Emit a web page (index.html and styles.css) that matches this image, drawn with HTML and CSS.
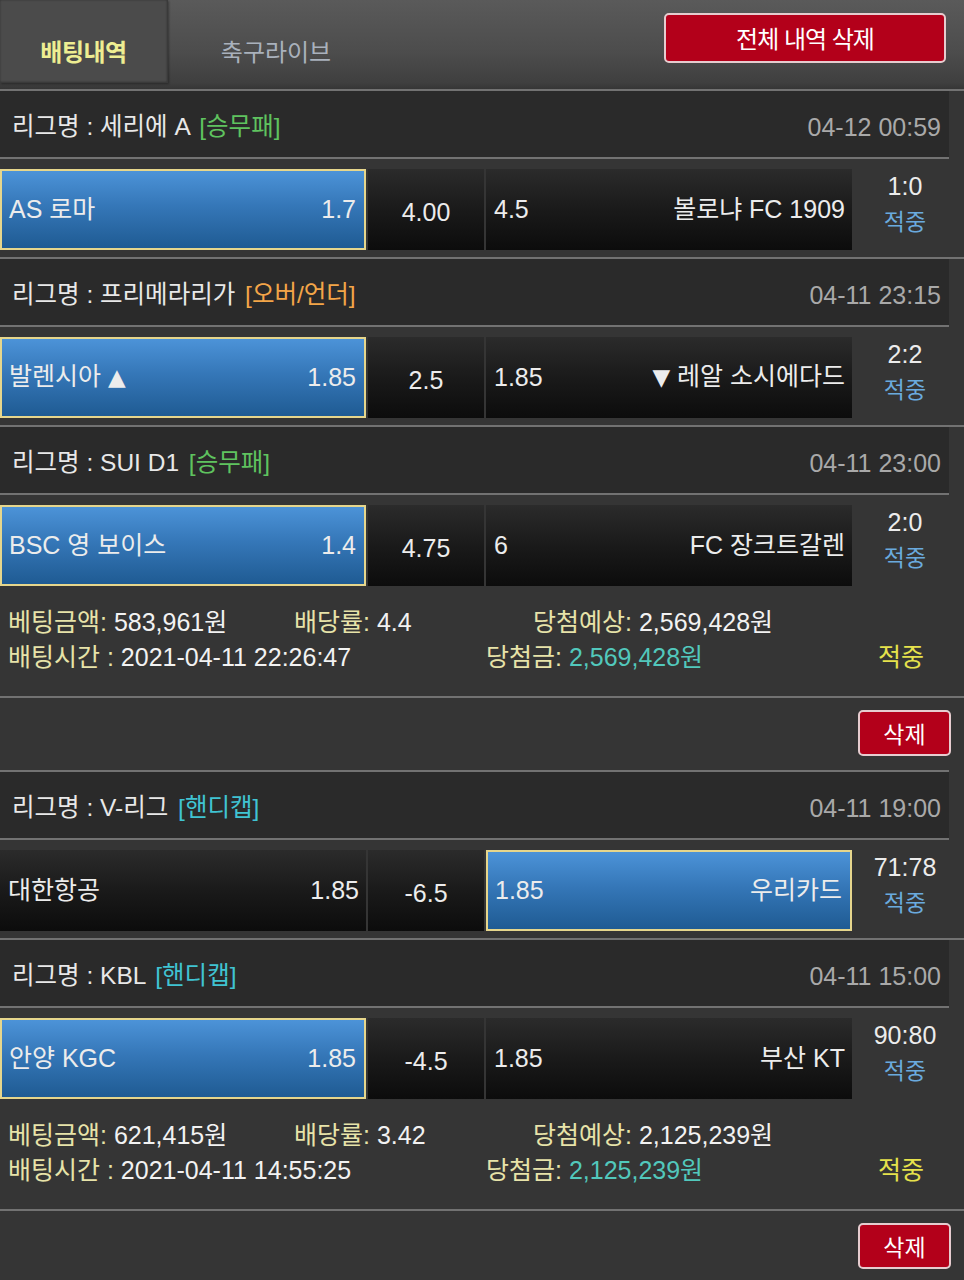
FILE: index.html
```html
<!DOCTYPE html>
<html lang="ko">
<head>
<meta charset="utf-8">
<title>배팅내역</title>
<link rel="stylesheet" href="styles.css">
</head>
<body>
<div class="topbar">
  <div class="tab active">배팅내역</div>
  <div class="tab">축구라이브</div>
  <div class="spacer"></div>
  <button class="btn-red btn-all">전체 내역 삭제</button>
</div>
<div class="line"></div>

<div class="league"><span>리그명 : 세리에 A <span class="tag green">[승무패]</span></span><span class="date">04-12 00:59</span></div>
<div class="line short"></div>
<div class="match">
  <div class="cell team sel"><span>AS 로마</span><span>1.7</span></div>
  <div class="cell mid">4.00</div>
  <div class="cell team"><span>4.5</span><span>볼로냐 FC 1909</span></div>
  <div class="score"><div>1:0</div><div class="hit">적중</div></div>
</div>
<div class="line"></div>

<div class="league"><span>리그명 : 프리메라리가 <span class="tag orange">[오버/언더]</span></span><span class="date">04-11 23:15</span></div>
<div class="line short"></div>
<div class="match">
  <div class="cell team sel"><span>발렌시아 <span class="tri">▲</span></span><span>1.85</span></div>
  <div class="cell mid">2.5</div>
  <div class="cell team"><span>1.85</span><span><span class="tri">▼</span> 레알 소시에다드</span></div>
  <div class="score"><div>2:2</div><div class="hit">적중</div></div>
</div>
<div class="line"></div>

<div class="league"><span>리그명 : SUI D1 <span class="tag green">[승무패]</span></span><span class="date">04-11 23:00</span></div>
<div class="line short"></div>
<div class="match">
  <div class="cell team sel"><span>BSC 영 보이스</span><span>1.4</span></div>
  <div class="cell mid">4.75</div>
  <div class="cell team"><span>6</span><span>FC 장크트갈렌</span></div>
  <div class="score"><div>2:0</div><div class="hit">적중</div></div>
</div>
<div class="summary">
  <div class="srow">
    <span class="c1"><span class="lbl">베팅금액:</span> 583,961원</span>
    <span class="c2"><span class="lbl">배당률:</span> 4.4</span>
    <span><span class="lbl">당첨예상:</span> 2,569,428원</span>
  </div>
  <div class="srow">
    <span class="d1"><span class="lbl">배팅시간 :</span> 2021-04-11 22:26:47</span>
    <span class="d2"><span class="lbl">당첨금:</span> <span class="teal">2,569,428원</span></span>
    <span class="win">적중</span>
  </div>
</div>
<div class="line"></div>
<div class="delrow"><button class="btn-red btn-del">삭제</button></div>
<div class="line short"></div>

<div class="league"><span>리그명 : V-리그 <span class="tag cyan">[핸디캡]</span></span><span class="date">04-11 19:00</span></div>
<div class="line short"></div>
<div class="match">
  <div class="cell team"><span>대한항공</span><span>1.85</span></div>
  <div class="cell mid">-6.5</div>
  <div class="cell team sel"><span>1.85</span><span>우리카드</span></div>
  <div class="score"><div>71:78</div><div class="hit">적중</div></div>
</div>
<div class="line"></div>

<div class="league"><span>리그명 : KBL <span class="tag cyan">[핸디캡]</span></span><span class="date">04-11 15:00</span></div>
<div class="line short"></div>
<div class="match">
  <div class="cell team sel"><span>안양 KGC</span><span>1.85</span></div>
  <div class="cell mid">-4.5</div>
  <div class="cell team"><span>1.85</span><span>부산 KT</span></div>
  <div class="score"><div>90:80</div><div class="hit">적중</div></div>
</div>
<div class="summary">
  <div class="srow">
    <span class="c1"><span class="lbl">베팅금액:</span> 621,415원</span>
    <span class="c2"><span class="lbl">배당률:</span> 3.42</span>
    <span><span class="lbl">당첨예상:</span> 2,125,239원</span>
  </div>
  <div class="srow">
    <span class="d1"><span class="lbl">배팅시간 :</span> 2021-04-11 14:55:25</span>
    <span class="d2"><span class="lbl">당첨금:</span> <span class="teal">2,125,239원</span></span>
    <span class="win">적중</span>
  </div>
</div>
<div class="line"></div>
<div class="delrow"><button class="btn-red btn-del">삭제</button></div>
</body>
</html>
```

FILE: styles.css
```css
* { box-sizing: border-box; }
html, body { margin: 0; padding: 0; }
body {
  width: 964px;
  height: 1280px;
  overflow: hidden;
  background: #353535;
  color: #ececec;
  font-family: "Liberation Sans", "Noto Sans CJK KR", "DejaVu Sans", sans-serif;
  font-size: 23px;
  line-height: 1.2;
}

.topbar {
  height: 89px;
  display: flex;
  align-items: flex-start;
  background: linear-gradient(#5a5a5a, #4c4c4c 60%, #3f3f3f 93%, #363636);
}
.tab {
  height: 83px;
  display: flex;
  align-items: center;
  justify-content: center;
  padding-top: 24px;
  font-size: 24px;
  color: #a9b1bc;
}
.tab:first-child { width: 168px; }
.tab:nth-child(2) { width: 216px; }
.tab.active {
  background: #4b4b4b;
  color: #eeee92;
  font-weight: bold;
  font-size: 24px;
  border-right: 1px solid #3a3a3a;
  border-bottom: 1px solid #3a3a3a;
  box-shadow: inset 0 0 2px rgba(0,0,0,0.4), 1px 1px 2px rgba(0,0,0,0.35);
  letter-spacing: -0.5px;
}
.spacer { flex: 1; }

.btn-red {
  font-family: inherit;
  color: #ffffff;
  background: #b3001a;
  border: 2px solid #e6cccf;
  border-radius: 5px;
  padding: 0;
  display: flex;
  align-items: center;
  justify-content: center;
  cursor: pointer;
}
.btn-all {
  width: 282px;
  height: 50px;
  margin-top: 13px;
  margin-right: 18px;
  font-size: 24px;
  letter-spacing: -1px;
  padding-bottom: 2px;
}
.btn-del {
  width: 93px;
  height: 46px;
  margin-top: 12px;
  margin-right: 13px;
  font-size: 23px;
}

.line { height: 2px; background: #727272; }
.line.short { margin-right: 15px; }

.league {
  height: 66px;
  margin-right: 15px;
  background: #2a2a2a;
  display: flex;
  align-items: center;
  justify-content: space-between;
  padding: 6px 8px 0 12px;
  font-size: 24.5px;
  color: #e8e8e8;
}
.date { color: #a9a9a9; font-size: 25px; }
.tag { margin-left: 3px; }
.tag.green { color: #5fc35f; }
.tag.orange { color: #f3a548; }
.tag.cyan { color: #40c3d2; }

.match {
  height: 98px;
  display: flex;
  gap: 2px;
  padding-top: 10px;
  font-size: 25px;
}
.cell {
  height: 81px;
  display: flex;
  align-items: center;
  background: linear-gradient(#2b2b2b, #1a1a1a 50%, #0c0c0c);
}
.cell.team {
  width: 366px;
  justify-content: space-between;
  padding: 0 7px 2px 8px;
}
.cell.sel {
  border: 2px solid #e6d68c;
  background: linear-gradient(#4c93d8, #3577b8 45%, #1f5b93);
  padding: 0 8px 2px 7px;
}
.cell.mid {
  width: 116px;
  justify-content: center;
  padding-top: 4px;
}
.tri { font-family: "DejaVu Sans", sans-serif; font-size: 23px; }
.score {
  flex: 1;
  height: 81px;
  display: flex;
  flex-direction: column;
  align-items: center;
  justify-content: center;
  padding: 0 8px 12px 0;
  line-height: 36px;
  font-size: 25px;
}
.hit { color: #6aaade; font-size: 23px; }

.summary {
  height: 103px;
  padding: 11px 0 0 8px;
  font-size: 25px;
  color: #f2f2f2;
}
.srow { display: flex; height: 35px; align-items: center; white-space: nowrap; }
.c1 { width: 286px; }
.c2 { width: 239px; }
.d1 { width: 478px; }
.d2 { width: 392px; }
.lbl { color: #e7e3a9; }
.teal { color: #52c8bc; }
.win { color: #e6e24c; }

.delrow {
  height: 72px;
  display: flex;
  justify-content: flex-end;
  align-items: flex-start;
}
```
